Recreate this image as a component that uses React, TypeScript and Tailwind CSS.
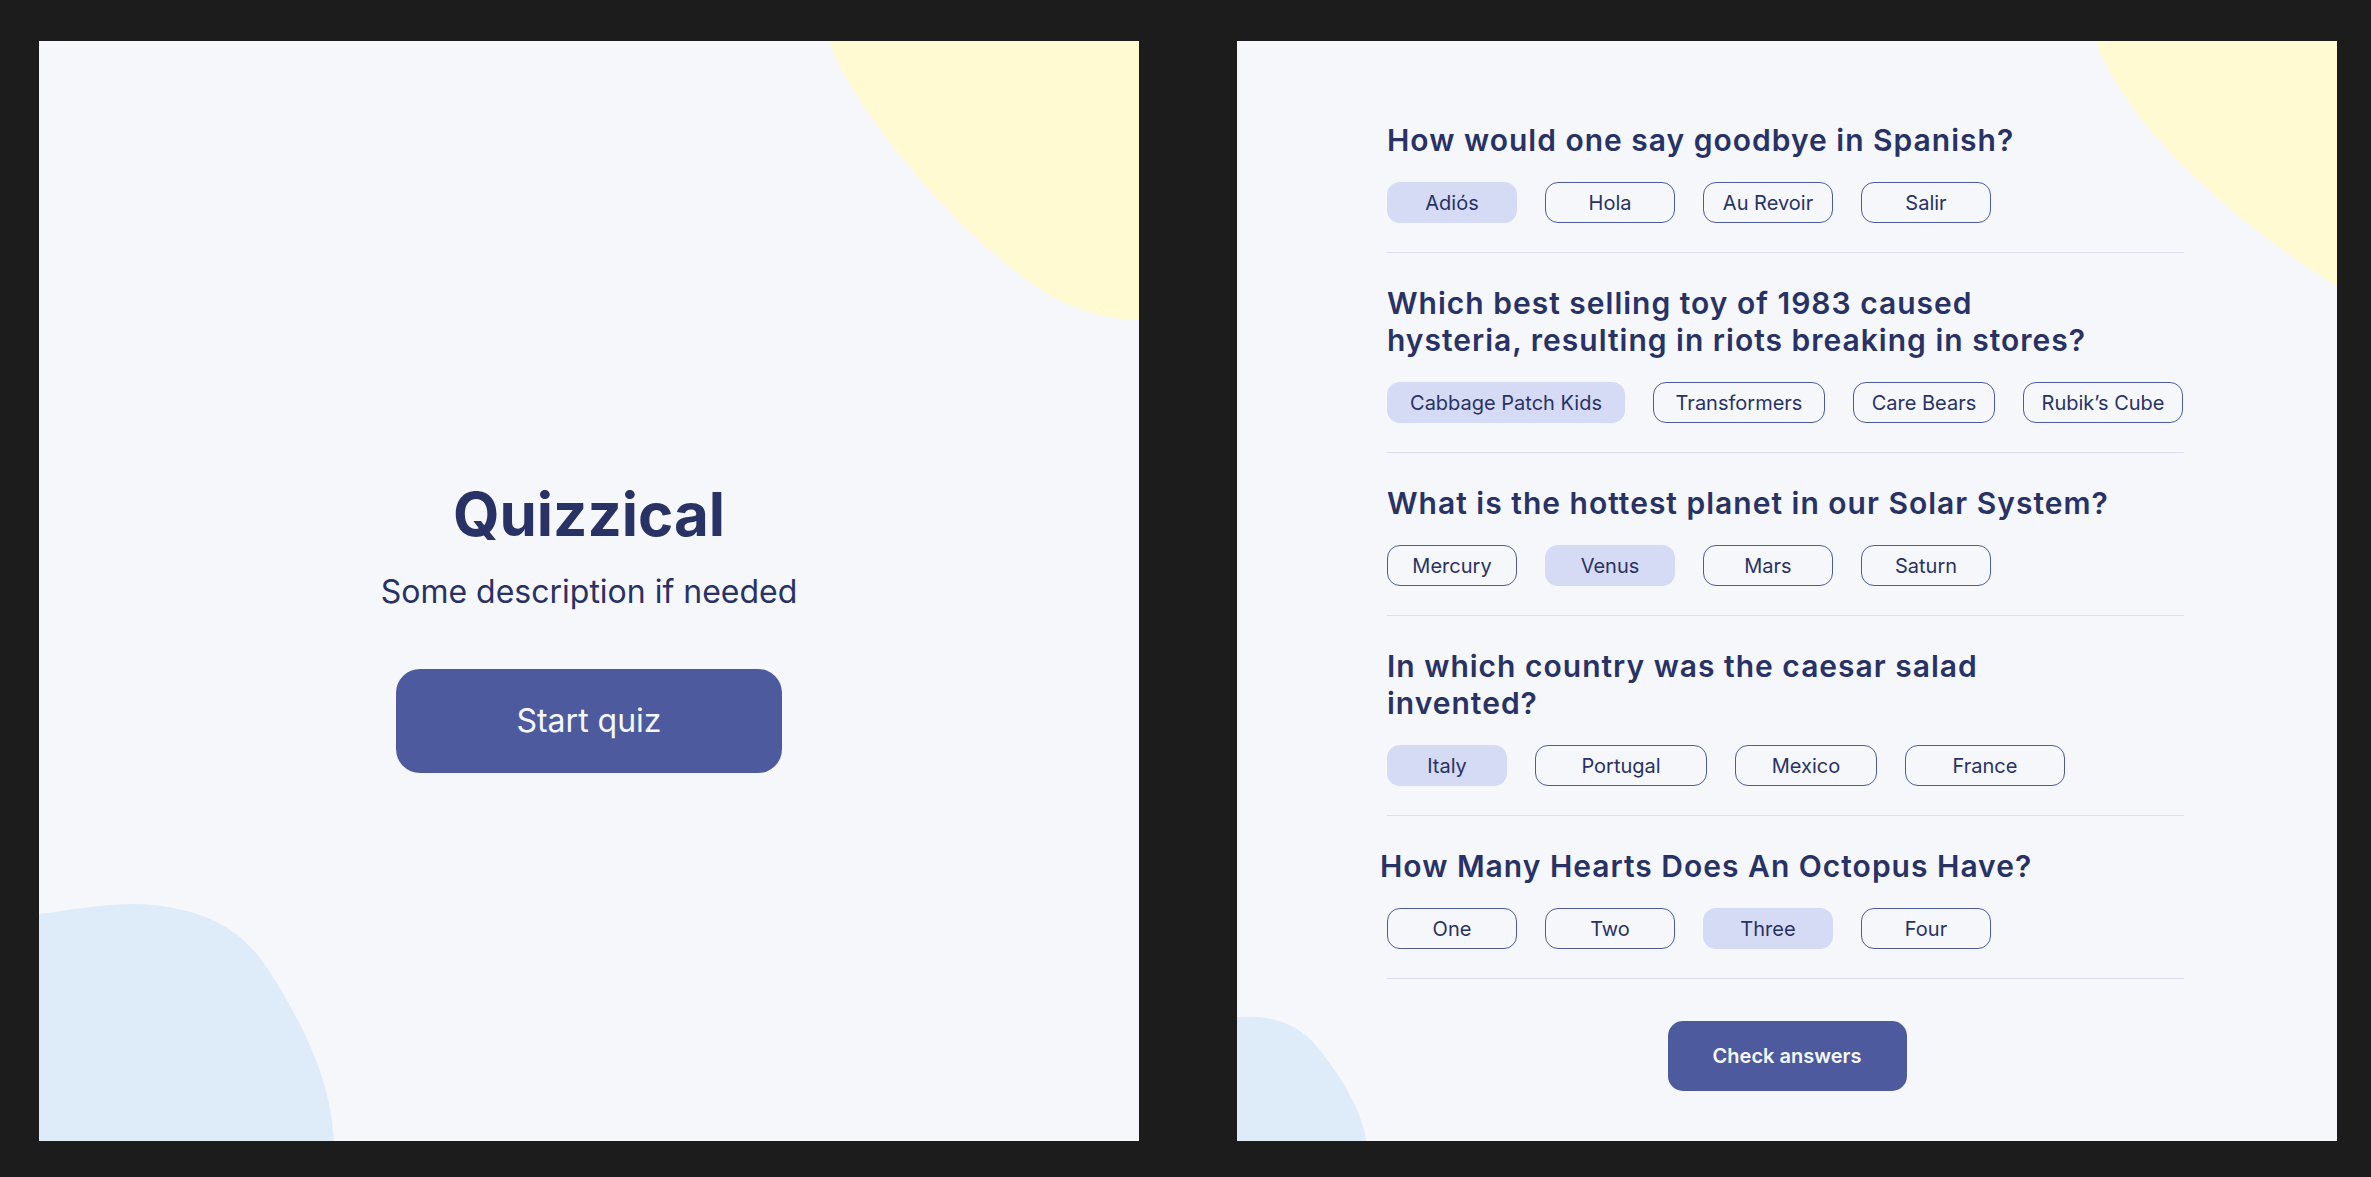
import React from "react";

type Answer = { text: string; selected?: boolean; width?: string };
type Question = { lines: string[]; answers: Answer[]; shift?: boolean };

const questions: Question[] = [
  {
    lines: ["How would one say goodbye in Spanish?"],
    answers: [
      { text: "Adiós", selected: true },
      { text: "Hola" },
      { text: "Au Revoir" },
      { text: "Salir" },
    ],
  },
  {
    lines: [
      "Which best selling toy of 1983 caused",
      "hysteria, resulting in riots breaking in stores?",
    ],
    answers: [
      { text: "Cabbage Patch Kids", selected: true, width: "w-[238px]" },
      { text: "Transformers", width: "w-[172px]" },
      { text: "Care Bears", width: "w-[142px]" },
      { text: "Rubik’s Cube", width: "w-[160px]" },
    ],
  },
  {
    lines: ["What is the hottest planet in our Solar System?"],
    answers: [
      { text: "Mercury" },
      { text: "Venus", selected: true },
      { text: "Mars" },
      { text: "Saturn" },
    ],
  },
  {
    lines: ["In which country was the caesar salad", "invented?"],
    answers: [
      { text: "Italy", selected: true, width: "w-[120px]" },
      { text: "Portugal", width: "w-[172px]" },
      { text: "Mexico", width: "w-[142px]" },
      { text: "France", width: "w-[160px]" },
    ],
  },
  {
    lines: ["How Many Hearts Does An Octopus Have?"],
    shift: true,
    answers: [
      { text: "One" },
      { text: "Two" },
      { text: "Three", selected: true },
      { text: "Four" },
    ],
  },
];

function Pill({ text, selected, width }: Answer) {
  return (
    <button
      className={`flex h-[41px] items-center justify-center rounded-[13px] text-[20px] text-[#293264] ${
        width ?? "w-[130px]"
      } ${
        selected
          ? "bg-[#D6DBF5]"
          : "border border-[#4D5B9E] bg-transparent"
      }`}
    >
      {text}
    </button>
  );
}

function StartScreen() {
  return (
    <div className="relative h-[1100px] w-[1100px] shrink-0 overflow-hidden bg-[#F5F7FB]">
      <svg
        className="absolute inset-0 h-full w-full"
        viewBox="0 0 1100 1100"
        aria-hidden
      >
        <path
          d="M790 0 C810 60 900 170 970 225 C1010 258 1050 278 1100 279 L1100 0 Z"
          fill="#FFFAD1"
        />
        <path
          d="M0 873 C40 868 80 860 114 864 C170 870 205 890 230 930 C275 1000 292 1050 295 1100 L0 1100 Z"
          fill="#DEEBF8"
        />
      </svg>
      <div className="relative flex flex-col items-center pt-[443px] text-[#293264]">
        <h1 className="text-[60px] font-bold leading-none">Quizzical</h1>
        <p className="mt-[32px] text-[32px] leading-none">
          Some description if needed
        </p>
        <button className="mt-[61px] flex h-[104px] w-[386px] items-center justify-center rounded-[24px] bg-[#4D5B9E] text-[32px] text-[#F5F7FB]">
          Start quiz
        </button>
      </div>
    </div>
  );
}

function QuizScreen() {
  return (
    <div className="relative h-[1100px] w-[1100px] shrink-0 overflow-hidden bg-[#F5F7FB]">
      <svg
        className="absolute inset-0 h-full w-full"
        viewBox="0 0 1100 1100"
        aria-hidden
      >
        <path
          d="M859 0 C890 90 1010 190 1100 245 L1100 0 Z"
          fill="#FFFAD1"
        />
        <path
          d="M0 976 C30 974 55 980 75 1000 C105 1035 125 1070 129 1100 L0 1100 Z"
          fill="#DEEBF8"
        />
      </svg>
      <div className="relative flex flex-col px-[150px] pt-[81px] text-[#293264]">
        {questions.map((q, qi) => (
          <div key={qi} className={qi === 0 ? "" : "pt-[32px]"}>
            <h2
              className={`text-[30px] font-semibold leading-[37px] tracking-[1px] ${
                q.shift ? "-ml-[7px]" : ""
              }`}
            >
              {q.lines.map((line, li) => (
                <span key={li} className="block">
                  {line}
                </span>
              ))}
            </h2>
            <div className="mt-[23px] flex gap-[28px]">
              {q.answers.map((a) => (
                <Pill key={a.text} {...a} />
              ))}
            </div>
            <div className="mt-[29px] h-px w-[797px] bg-[#DBDEF0]" />
          </div>
        ))}
        <div className="mt-[42px] flex justify-center">
          <button className="flex h-[70px] w-[239px] items-center justify-center rounded-[15px] bg-[#4D5B9E] text-[20px] font-semibold text-[#F5F7FB]">
            Check answers
          </button>
        </div>
      </div>
    </div>
  );
}

export default function App() {
  return (
    <div
      className="flex h-screen w-full gap-[98px] bg-[#1C1C1C] pl-[39px] pt-[41px]"
      style={{ fontFamily: "Inter, 'Noto Sans', sans-serif" }}
    >
      <StartScreen />
      <QuizScreen />
    </div>
  );
}
